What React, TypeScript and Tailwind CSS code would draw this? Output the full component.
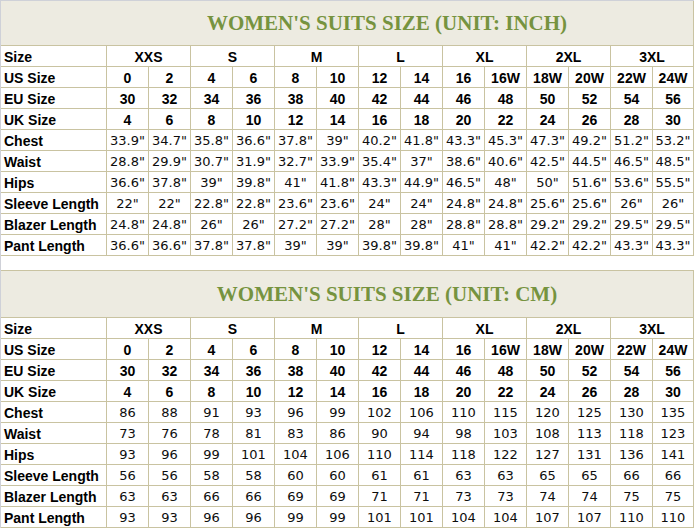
import React from "react";

const groups = ["XXS", "S", "M", "L", "XL", "2XL", "3XL"];
const us = ["0", "2", "4", "6", "8", "10", "12", "14", "16", "16W", "18W", "20W", "22W", "24W"];
const eu = ["30", "32", "34", "36", "38", "40", "42", "44", "46", "48", "50", "52", "54", "56"];
const uk = ["4", "6", "8", "10", "12", "14", "16", "18", "20", "22", "24", "26", "28", "30"];

const inch: [string, string[]][] = [
  ["Chest", ["33.9", "34.7", "35.8", "36.6", "37.8", "39", "40.2", "41.8", "43.3", "45.3", "47.3", "49.2", "51.2", "53.2"]],
  ["Waist", ["28.8", "29.9", "30.7", "31.9", "32.7", "33.9", "35.4", "37", "38.6", "40.6", "42.5", "44.5", "46.5", "48.5"]],
  ["Hips", ["36.6", "37.8", "39", "39.8", "41", "41.8", "43.3", "44.9", "46.5", "48", "50", "51.6", "53.6", "55.5"]],
  ["Sleeve Length", ["22", "22", "22.8", "22.8", "23.6", "23.6", "24", "24", "24.8", "24.8", "25.6", "25.6", "26", "26"]],
  ["Blazer Length", ["24.8", "24.8", "26", "26", "27.2", "27.2", "28", "28", "28.8", "28.8", "29.2", "29.2", "29.5", "29.5"]],
  ["Pant Length", ["36.6", "36.6", "37.8", "37.8", "39", "39", "39.8", "39.8", "41", "41", "42.2", "42.2", "43.3", "43.3"]],
];

const cm: [string, string[]][] = [
  ["Chest", ["86", "88", "91", "93", "96", "99", "102", "106", "110", "115", "120", "125", "130", "135"]],
  ["Waist", ["73", "76", "78", "81", "83", "86", "90", "94", "98", "103", "108", "113", "118", "123"]],
  ["Hips", ["93", "96", "99", "101", "104", "106", "110", "114", "118", "122", "127", "131", "136", "141"]],
  ["Sleeve Length", ["56", "56", "58", "58", "60", "60", "61", "61", "63", "63", "65", "65", "66", "66"]],
  ["Blazer Length", ["63", "63", "66", "66", "69", "69", "71", "71", "73", "73", "74", "74", "75", "75"]],
  ["Pant Length", ["93", "93", "96", "96", "99", "99", "101", "101", "104", "104", "107", "107", "110", "110"]],
];

function Label({ children }: { children: React.ReactNode }) {
  return (
    <div className="h-[20px] bg-white flex items-center pt-px pl-[3px] font-['Liberation_Sans',Arial,sans-serif] font-bold text-[14px] text-black leading-none whitespace-nowrap">
      {children}
    </div>
  );
}

function BoldCell({ children, span }: { children: React.ReactNode; span?: boolean }) {
  return (
    <div
      className={`h-[20px] bg-white flex items-center justify-center pt-px font-['Liberation_Sans',Arial,sans-serif] font-bold text-[14px] text-black leading-none ${span ? "col-span-2" : ""}`}
    >
      {children}
    </div>
  );
}

function ValCell({ children }: { children: React.ReactNode }) {
  return (
    <div className="h-[20px] bg-white flex items-center justify-center pt-px font-['DejaVu_Sans',Verdana,sans-serif] text-[13px] text-[#0d0d0d] leading-none whitespace-nowrap">
      {children}
    </div>
  );
}

function SizeTable({
  title,
  unit,
  rows,
  titleH,
  topLine,
}: {
  title: string;
  unit: string;
  rows: [string, string[]][];
  titleH: string;
  topLine: boolean;
}) {
  return (
    <div
      className={`grid grid-cols-[105px_repeat(13,41px)_40px] gap-px pr-px pb-px bg-[#c9c3a1] ${topLine ? "pt-px" : ""}`}
    >
      <div
        className={`col-span-15 ${titleH} bg-[#edebe1] flex items-center justify-center pl-[80px] font-['Liberation_Serif','Times_New_Roman',serif] font-bold text-[21px] text-[#76933f] leading-none`}
      >
        {title}
      </div>
      <Label>Size</Label>
      {groups.map((g) => (
        <BoldCell key={g} span>
          {g}
        </BoldCell>
      ))}
      <Label>US Size</Label>
      {us.map((v, i) => (
        <BoldCell key={"us" + i}>{v}</BoldCell>
      ))}
      <Label>EU Size</Label>
      {eu.map((v, i) => (
        <BoldCell key={"eu" + i}>{v}</BoldCell>
      ))}
      <Label>UK Size</Label>
      {uk.map((v, i) => (
        <BoldCell key={"uk" + i}>{v}</BoldCell>
      ))}
      {rows.map(([name, vals]) => (
        <React.Fragment key={name}>
          <Label>{name}</Label>
          {vals.map((v, i) => (
            <ValCell key={name + i}>
              {v}
              {unit}
            </ValCell>
          ))}
        </React.Fragment>
      ))}
    </div>
  );
}

export default function App() {
  return (
    <div className="w-[694px] h-[528px] bg-white border-l border-t border-[#cfd1d8] flex flex-col overflow-hidden">
      <SizeTable
        title="WOMEN'S SUITS SIZE (UNIT: INCH)"
        unit={'"'}
        rows={inch}
        titleH="h-[44px]"
        topLine={false}
      />
      <div className="h-[14px] bg-white shrink-0" />
      <SizeTable
        title="WOMEN'S SUITS SIZE (UNIT: CM)"
        unit=""
        rows={cm}
        titleH="h-[46px]"
        topLine={true}
      />
    </div>
  );
}
